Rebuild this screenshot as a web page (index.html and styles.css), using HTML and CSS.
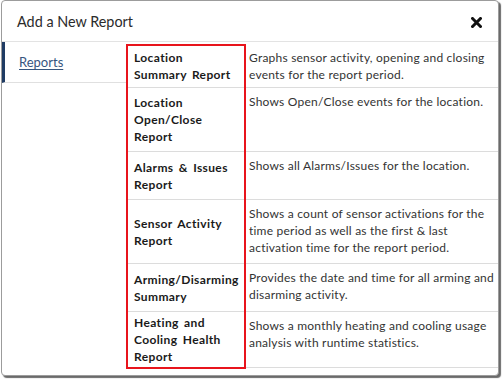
FILE: index.html
```html
<!DOCTYPE html>
<html lang="en">
<head>
    <meta charset="UTF-8">
    <title>Add a New Report</title>
    <link rel="stylesheet" href="styles.css">
</head>
<body>
    <div class="modal">
        <header class="modal-header">
            <h1>Add a New Report</h1>
            <button class="close-btn" aria-label="Close">
                <svg width="11" height="11" viewBox="0 0 11 11">
                    <path d="M1.5 1.5 L9.5 9.5 M9.5 1.5 L1.5 9.5" stroke="#111" stroke-width="3" stroke-linecap="square"/>
                </svg>
            </button>
        </header>

        <div class="modal-body">
            <nav class="side-nav">
                <a href="#" class="side-item active">Reports</a>
            </nav>

            <div class="report-table">
                <div class="report-row">
                    <div class="report-name">Location Summary Report</div>
                    <div class="report-desc">Graphs sensor activity, opening and closing events for the report period.</div>
                </div>
                <div class="report-row">
                    <div class="report-name">Location Open/Close Report</div>
                    <div class="report-desc">Shows Open/Close events for the location.</div>
                </div>
                <div class="report-row">
                    <div class="report-name">Alarms &amp; Issues Report</div>
                    <div class="report-desc">Shows all Alarms/Issues for the location.</div>
                </div>
                <div class="report-row">
                    <div class="report-name">Sensor Activity Report</div>
                    <div class="report-desc">Shows a count of sensor activations for the time period as well as the first &amp; last activation time for the report period.</div>
                </div>
                <div class="report-row">
                    <div class="report-name">Arming/Disarming Summary</div>
                    <div class="report-desc">Provides the date and time for all arming and disarming activity.</div>
                </div>
                <div class="report-row">
                    <div class="report-name">Heating and Cooling Health Report</div>
                    <div class="report-desc">Shows a monthly heating and cooling usage analysis with runtime statistics.</div>
                </div>

                <!-- annotation box -->
                <div class="highlight"></div>
            </div>
        </div>
    </div>
</body>
</html>
```

FILE: styles.css
```css
/* styles.css */

html, body {
    margin: 0;
    padding: 0;
    background-color: #fff;
}

body {
    font-family: 'Lato', 'Open Sans', sans-serif;
    color: #333;
    width: 502px;
    height: 379px;
    overflow: hidden;
}

.modal {
    box-sizing: border-box;
    width: 498px;
    height: 376px;
    margin: 0 0 0 1px;
    background-color: #fff;
    border: 1px solid #9c9c9c;
    border-radius: 4px;
    box-shadow: 2px 2px 1px #6a6a6a;
    overflow: hidden;
}

.modal-header {
    display: flex;
    align-items: center;
    justify-content: space-between;
    height: 40px;
    padding: 0 16px 0 15px;
    border-bottom: 1px solid #e3e3e3;
}

.modal-header h1 {
    margin: 0;
    font-size: 14.4px;
    font-weight: 400;
    color: #2b2b2b;
}

.close-btn {
    border: 0;
    background: none;
    padding: 0;
    margin-top: 2px;
    display: flex;
    cursor: pointer;
}

.modal-body {
    display: flex;
    align-items: flex-start;
}

.side-nav {
    width: 124px;
    flex-shrink: 0;
}

.side-item {
    display: flex;
    align-items: center;
    height: 40px;
    padding-left: 14px;
    border-left: 3px solid #1f3b63;
    border-bottom: 1px solid #e0e0e0;
    font-size: 13px;
    color: #37567f;
    text-decoration: underline;
    text-underline-offset: 2px;
}

.report-table {
    position: relative;
    width: 372px;
    margin-top: 2px;
}

.report-row {
    display: flex;
    border-bottom: 1px solid #dcdcdc;
    box-sizing: border-box;
}

.report-row:last-of-type {
    border-bottom: 0;
}

.report-row:nth-child(1) { height: 44px; }
.report-row:nth-child(2) { height: 64px; }
.report-row:nth-child(3) { height: 48px; }
.report-row:nth-child(4) { height: 64px; }
.report-row:nth-child(5) { height: 48px; }
.report-row:nth-child(6) { height: 56px; }

.report-name {
    box-sizing: border-box;
    width: 121px;
    flex-shrink: 0;
    display: flex;
    align-items: center;
    padding: 0 7px 0 8px;
    font-size: 12px;
    font-weight: 700;
    line-height: 17px;
    letter-spacing: 0.38px;
    word-spacing: 2px;
    color: #1a1a1a;
}

.report-desc {
    flex: 1;
    padding: 5px 3px 0 2px;
    font-size: 12px;
    line-height: 17px;
    letter-spacing: 0.22px;
    color: #333;
}

/* red annotation rectangle drawn over the name column */
.highlight {
    position: absolute;
    left: 0;
    top: 0;
    width: 120px;
    bottom: -1px;
    box-sizing: border-box;
    border: 2px solid #e8141c;
    pointer-events: none;
}
```
